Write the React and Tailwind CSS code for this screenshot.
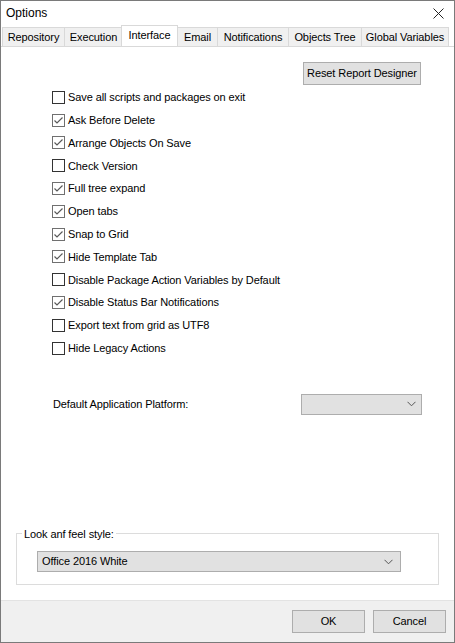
import React from "react";

const tabs = [
  { label: "Repository", w: "w-[62px]" },
  { label: "Execution", w: "w-[58px]" },
  { label: "Interface", w: "w-[57px]", active: true },
  { label: "Email", w: "w-[40px]" },
  { label: "Notifications", w: "w-[71px]" },
  { label: "Objects Tree", w: "w-[73px]" },
  { label: "Global Variables", w: "w-[88px]", last: true },
];

const options = [
  ["Save all scripts and packages on exit", false],
  ["Ask Before Delete", true],
  ["Arrange Objects On Save", true],
  ["Check Version", false],
  ["Full tree expand", true],
  ["Open tabs", true],
  ["Snap to Grid", true],
  ["Hide Template Tab", true],
  ["Disable Package Action Variables by Default", false],
  ["Disable Status Bar Notifications", true],
  ["Export text from grid as UTF8", false],
  ["Hide Legacy Actions", false],
];

function Check({ checked }) {
  return (
    <div
      className={
        "w-[13px] h-[13px] border bg-white shrink-0 " +
        (checked ? "border-[#707070]" : "border-[#333333]")
      }
    >
      {checked && (
        <svg width="11" height="11" viewBox="0 0 11 11">
          <polyline
            points="1.5,5.5 4,8 9.5,2.5"
            fill="none"
            stroke="#5a5a5a"
            strokeWidth="1.2"
          />
        </svg>
      )}
    </div>
  );
}

function Chevron() {
  return (
    <svg width="9" height="6" viewBox="0 0 9 6">
      <polyline points="0.5,0.8 4.5,4.8 8.5,0.8" fill="none" stroke="#555" strokeWidth="1" />
    </svg>
  );
}

export default function App() {
  return (
    <div className="w-[455px] h-[643px] border border-[#7a7a7a] bg-white flex flex-col font-['Liberation_Sans',Arial,sans-serif] text-[11px] text-black tracking-[-0.1px] overflow-hidden">
      {/* title bar */}
      <div className="h-[24px] flex items-center pl-[5px] pr-[10px] shrink-0">
        <span className="text-[12px] tracking-normal">Options</span>
        <svg className="ml-auto mt-[1px]" width="11" height="11" viewBox="0 0 11 11">
          <path d="M0.5 0.5 L10.5 10.5 M10.5 0.5 L0.5 10.5" stroke="#222" strokeWidth="1" />
        </svg>
      </div>
      {/* tab strip */}
      <div className="h-[21px] flex items-end pl-[1px] shrink-0">
        {tabs.map((t) => (
          <div
            key={t.label}
            className={
              t.w +
              " flex items-center justify-center whitespace-nowrap border-t border-l border-[#d9d9d9] " +
              (t.last ? "border-r " : "") +
              (t.active
                ? "h-[21px] bg-white -mx-[1px] px-[1px] pb-[2px] relative z-10 border-r"
                : "h-[19px] bg-[#f0f0f0]")
            }
          >
            {t.label}
          </div>
        ))}
      </div>
      {/* tab page */}
      <div className="flex-1 flex flex-col border-t border-[#d9d9d9] bg-white">
        <div className="flex justify-end pr-[33px] pt-[15px]">
          <div className="w-[118px] h-[23px] bg-[#e1e1e1] border border-[#adadad] flex items-center justify-center whitespace-nowrap">
            Reset Report Designer
          </div>
        </div>
        <div className="flex flex-col pl-[51px] mt-[1px]">
          {options.map(([label, checked]) => (
            <div key={label} className="h-[22.8px] flex items-center gap-[3px]">
              <Check checked={checked} />
              <span>{label}</span>
            </div>
          ))}
        </div>
        <div className="flex items-center pl-[52px] pr-[32px] mt-[34px]">
          <span>Default Application Platform:</span>
          <div className="ml-auto w-[121px] h-[21px] bg-[#e1e1e1] border border-[#adadad] flex items-center justify-end pr-[5px]">
            <Chevron />
          </div>
        </div>
        <div className="mt-auto mb-[15px] mx-[15px] border border-[#dcdcdc] h-[52px] relative px-[20px] pt-[17px]">
          <span className="absolute -top-[8px] left-[5px] bg-white px-[2px]">Look anf feel style:</span>
          <div className="w-[364px] h-[21px] bg-[#e1e1e1] border border-[#adadad] flex items-center pl-[4px] pr-[7px]">
            <span>Office 2016 White</span>
            <span className="ml-auto"><Chevron /></span>
          </div>
        </div>
      </div>
      {/* bottom band */}
      <div className="h-[42px] shrink-0 bg-[#f0f0f0] border-t border-[#e3e3e3] flex items-center justify-end gap-[8px] pr-[8px]">
        <div className="w-[73px] h-[23px] bg-[#e1e1e1] border border-[#adadad] flex items-center justify-center">
          OK
        </div>
        <div className="w-[73px] h-[23px] bg-[#e1e1e1] border border-[#adadad] flex items-center justify-center">
          Cancel
        </div>
      </div>
    </div>
  );
}
